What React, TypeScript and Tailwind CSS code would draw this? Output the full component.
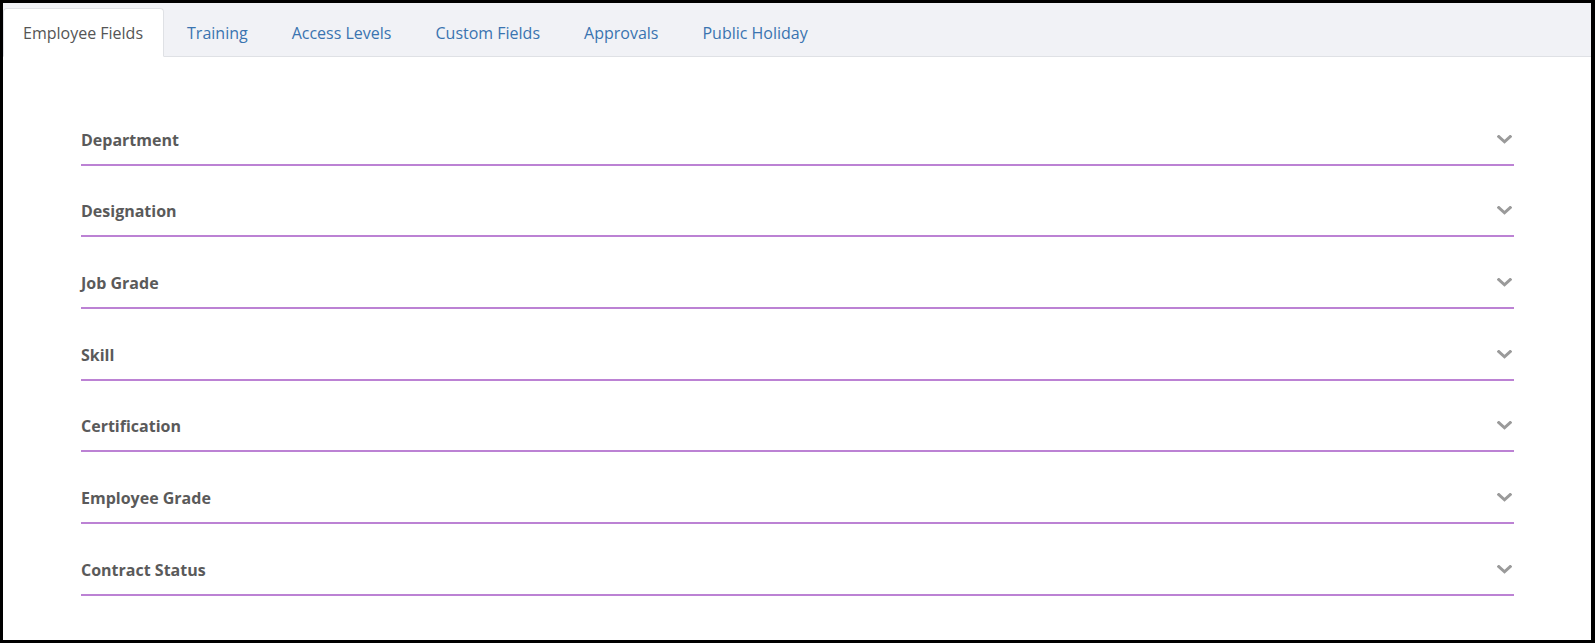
import { useState } from 'react';

const tabs = ['Employee Fields', 'Training', 'Access Levels', 'Custom Fields', 'Approvals', 'Public Holiday'];

const sections = [
  'Department',
  'Designation',
  'Job Grade',
  'Skill',
  'Certification',
  'Employee Grade',
  'Contract Status',
];

const Chevron = () => (
  <svg width="15" height="9" viewBox="0 0 15 9" className="text-[#9a9a9a]">
    <polyline points="1.8,1.6 7.5,6.8 13.2,1.6" fill="none" stroke="currentColor" strokeWidth="3" strokeLinecap="square" />
  </svg>
);

export default function App() {
  const [active, setActive] = useState(0);
  const [open, setOpen] = useState<number | null>(null);

  return (
    <div className="w-[1595px] h-[643px] bg-black pl-[3px] pt-[3px] pr-[4px] pb-[3px] font-['Open_Sans',sans-serif]">
      <div className="h-full bg-white flex flex-col">
        {/* tab strip */}
        <div className="h-[54px] bg-[#f1f2f6] border-b border-[#dfe1e5] flex items-end shrink-0">
          {tabs.map((t, i) => (
            <button
              key={t}
              onClick={() => setActive(i)}
              className={
                i === active
                  ? 'h-[49px] -mb-px mr-[3px] pl-[19px] pr-[20px] border border-[#dfe1e5] border-b-white bg-white rounded-t-[4px] text-[16px] text-[#555555]'
                  : 'h-[49px] -mb-px mr-[3px] pl-[19px] pr-[20px] border border-transparent text-[16px] text-[#3a74b0]'
              }
            >
              {t}
            </button>
          ))}
        </div>

        {/* collapsible field groups */}
        <div className="pl-[78px] pr-[77px] pt-[37px]">
          {sections.map((s, i) => (
            <div
              key={s}
              onClick={() => setOpen(open === i ? null : i)}
              className="h-[71.67px] border-b-2 border-[#bc82d4] flex items-end justify-between pb-[13px] cursor-pointer"
            >
              <span className="text-[16px] leading-[21px] font-bold text-[#5a5a5a]">{s}</span>
              <span className="mr-[2px] mb-[7px]">
                <Chevron />
              </span>
            </div>
          ))}
        </div>
      </div>
    </div>
  );
}
